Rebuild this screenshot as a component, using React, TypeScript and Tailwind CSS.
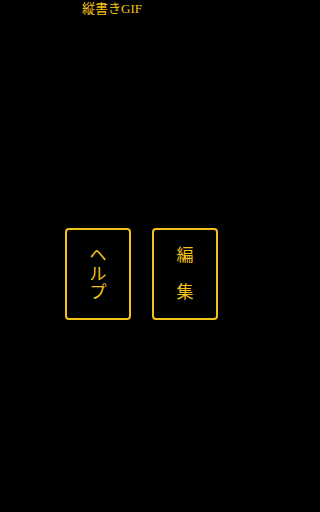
import React from 'react';

const gold = 'text-[#f3c21a]';

const VButton: React.FC<{ chars: string[] }> = ({ chars }) => (
  <button className="w-[66px] h-[92px] border-2 border-[#f3c21a] rounded-[4px] flex flex-col items-center justify-center bg-black pb-[2px]">
    {chars.map((c, i) => (
      <span key={i} className={`${gold} text-[17px] leading-[18.5px] h-[18.5px]`}>
        {c}
      </span>
    ))}
  </button>
);

export default function App() {
  return (
    <div className="w-full min-h-[512px] bg-black flex flex-col" style={{ fontFamily: '"Noto Sans CJK JP", sans-serif' }}>
      <div
        className={`${gold} pl-[82px] pt-[1px] text-[13px] leading-[16px]`}
        style={{ fontFamily: '"Liberation Serif", "Noto Sans CJK JP", serif' }}
      >
        縦書きGIF
      </div>
      <div className="flex gap-[21px] pl-[65px] mt-[211px]">
        <VButton chars={['ヘ', 'ル', 'プ']} />
        <VButton chars={['編', '\u3000', '集']} />
      </div>
    </div>
  );
}
